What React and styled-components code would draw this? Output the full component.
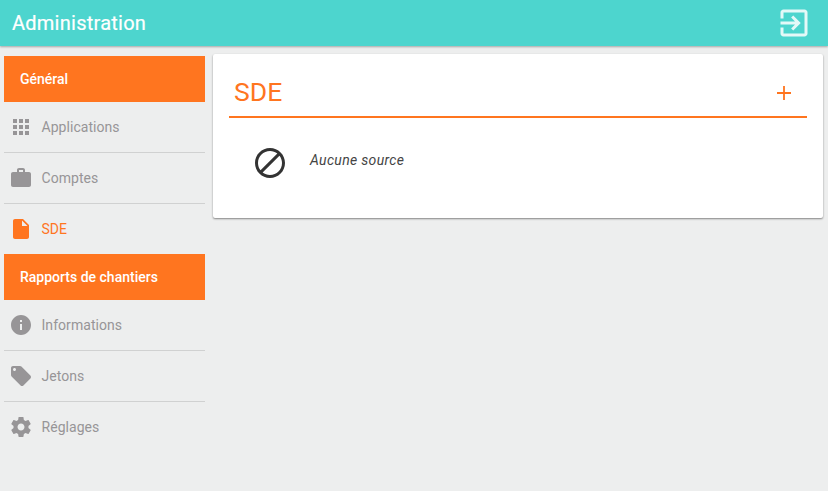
import React from "react";
import styled, { createGlobalStyle } from "styled-components";

const Global = createGlobalStyle`
  html, body { margin: 0; padding: 0; height: 100%; background: #edeeee; }
  body { font-family: Roboto, "Liberation Sans", sans-serif; overflow: hidden; }
  #root { height: 100%; }
`;

const Page = styled.div`
  width: 828px;
  height: 491px;
  display: flex;
  flex-direction: column;
  background: #edeeee;
`;

const Header = styled.header`
  height: 46px;
  flex: none;
  box-sizing: border-box;
  display: flex;
  align-items: center;
  justify-content: space-between;
  padding: 0 16px 0 12px;
  background: #4dd5ce;
  box-shadow: 0 1px 2px rgba(0, 0, 0, 0.3);
`;

const AppTitle = styled.h1`
  margin: 0;
  font-size: 20px;
  font-weight: 400;
  letter-spacing: 0.25px;
  color: #fff;
  -webkit-text-stroke: 0.2px #fff;
`;

const Body = styled.div`
  flex: 1;
  display: flex;
  align-items: flex-start;
  gap: 8px;
  padding: 8px 5px 0 4px;
`;

const Sidebar = styled.nav`
  width: 201px;
  flex: none;
  padding-top: 2px;
  display: flex;
  flex-direction: column;
`;

const SectionHead = styled.div`
  height: 46px;
  display: flex;
  align-items: center;
  padding-left: 16px;
  background: #ff751f;
  color: #fff;
  font-size: 14px;
  font-weight: 500;
`;

const NavItem = styled.div`
  box-sizing: border-box;
  display: flex;
  align-items: center;
  gap: 8.5px;
  padding-left: 5px;
  font-size: 14px;
  letter-spacing: 0.05px;
  color: ${(p) => (p.$active ? "#ff751f" : "#979597")};
  border-bottom: ${(p) => (p.$last ? "none" : "1px solid #d0d1d1")};
  height: ${(p) => (p.$last ? "50px" : "51px")};
`;

const Card = styled.main`
  flex: 1;
  height: 164px;
  box-sizing: border-box;
  padding: 0 16px;
  background: #fff;
  border-radius: 2px;
  box-shadow: 0 1px 2px rgba(0, 0, 0, 0.45);
`;

const CardHead = styled.div`
  height: 64px;
  box-sizing: border-box;
  display: flex;
  align-items: center;
  justify-content: space-between;
  padding: 16px 16px 0 5px;
  border-bottom: 2px solid #ff751f;
  color: #ff751f;
`;

const CardTitle = styled.h2`
  margin: 0 0 3px;
  font-size: 26.5px;
  font-weight: 400;
`;

const EmptyRow = styled.div`
  display: flex;
  align-items: flex-start;
  gap: 22px;
  padding: 27px 0 0 23px;
  color: #333;
`;

const EmptyText = styled.span`
  margin-top: 5px;
  font-size: 14px;
  font-style: italic;
  line-height: 20px;
  letter-spacing: 0.32px;
  color: #444;
`;

const PlusIcon = styled.svg`
  display: block;
  width: 14px;
  height: 14px;
`;

const ExitIcon = styled.svg`
  display: block;
  width: 36px;
  height: 36px;
  margin-top: -1px;
  fill: rgba(255, 255, 255, 0.85);
`;

const IconSvg = styled.svg`
  display: block;
  flex: none;
  width: ${(p) => p.$size}px;
  height: ${(p) => p.$size}px;
  fill: currentColor;
`;

const paths = {
  apps: "M4 8h4V4H4v4zm6 12h4v-4h-4v4zm-6 0h4v-4H4v4zm0-6h4v-4H4v4zm6 0h4v-4h-4v4zm6-10v4h4V4h-4zm-6 4h4V4h-4v4zm6 6h4v-4h-4v4zm0 6h4v-4h-4v4z",
  work: "M20 6h-4V4c0-1.11-.89-2-2-2h-4c-1.11 0-2 .89-2 2v2H4c-1.11 0-1.99.89-1.99 2L2 19c0 1.11.89 2 2 2h16c1.11 0 2-.89 2-2V8c0-1.11-.89-2-2-2zm-6 0h-4V4h4v2z",
  file: "M6 2c-1.1 0-1.99.9-1.99 2L4 20c0 1.1.89 2 2 2h12c1.1 0 2-.9 2-2V8l-6-6H6zm7 7V3.5L18.5 9H13z",
  info: "M12 2C6.48 2 2 6.48 2 12s4.48 10 10 10 10-4.48 10-10S17.52 2 12 2zm1 15h-2v-6h2v6zm0-8h-2V7h2v2z",
  tag: "M21.41 11.58l-9-9C12.05 2.22 11.55 2 11 2H4c-1.1 0-2 .9-2 2v7c0 .55.22 1.05.59 1.42l9 9c.36.36.86.58 1.41.58.55 0 1.05-.22 1.41-.59l7-7c.37-.36.59-.86.59-1.41 0-.55-.23-1.06-.59-1.42zM5.5 7C4.67 7 4 6.33 4 5.5S4.67 4 5.5 4 7 4.67 7 5.5 6.33 7 5.5 7z",
  gear: "M19.43 12.98c.04-.32.07-.64.07-.98s-.03-.66-.07-.98l2.11-1.65c.19-.15.24-.42.12-.64l-2-3.46c-.12-.22-.39-.3-.61-.22l-2.49 1c-.52-.4-1.08-.73-1.69-.98l-.38-2.65C14.46 2.18 14.25 2 14 2h-4c-.25 0-.46.18-.49.42l-.38 2.65c-.61.25-1.17.59-1.69.98l-2.49-1c-.23-.09-.49 0-.61.22l-2 3.46c-.13.22-.07.49.12.64l2.11 1.65c-.04.32-.07.65-.07.98s.03.66.07.98l-2.11 1.65c-.19.15-.24.42-.12.64l2 3.46c.12.22.39.3.61.22l2.49-1c.52.4 1.08.73 1.69.98l.38 2.65c.03.24.24.42.49.42h4c.25 0 .46-.18.49-.42l.38-2.65c.61-.25 1.17-.59 1.69-.98l2.49 1c.23.09.49 0 .61-.22l2-3.46c.12-.22.07-.49-.12-.64l-2.11-1.65zM12 15.5c-1.93 0-3.5-1.57-3.5-3.5s1.57-3.5 3.5-3.5 3.5 1.57 3.5 3.5-1.57 3.5-3.5 3.5z",
  block: "M12 2C6.48 2 2 6.48 2 12s4.48 10 10 10 10-4.48 10-10S17.52 2 12 2zM4 12c0-4.42 3.58-8 8-8 1.85 0 3.55.63 4.9 1.69L5.69 16.9C4.63 15.55 4 13.85 4 12zm8 8c-1.85 0-3.55-.63-4.9-1.69L18.31 7.1C19.37 8.45 20 10.15 20 12c0 4.42-3.58 8-8 8z",
};

const Icon = ({ name, size = 24 }) => (
  <IconSvg $size={size} viewBox="0 0 24 24" aria-hidden="true">
    <path d={paths[name]} />
  </IconSvg>
);

const sections = [
  {
    title: "Général",
    items: [
      { icon: "apps", label: "Applications" },
      { icon: "work", label: "Comptes" },
      { icon: "file", label: "SDE", active: true },
    ],
  },
  {
    title: "Rapports de chantiers",
    items: [
      { icon: "info", label: "Informations" },
      { icon: "tag", label: "Jetons" },
      { icon: "gear", label: "Réglages" },
    ],
  },
];

export default function App() {
  return (
    <Page>
      <Global />
      <Header>
        <AppTitle>Administration</AppTitle>
        <ExitIcon viewBox="0 0 24 24" aria-hidden="true">
          <path d="M10.09 15.59L11.5 17l5-5-5-5-1.41 1.41L12.67 11H3v2h9.67l-2.58 2.59zM19 3H5c-1.11 0-2 .9-2 2v4h2V5h14v14H5v-4H3v4c0 1.1.89 2 2 2h14c1.1 0 2-.89 2-2V5c0-1.1-.9-2-2-2z" />
        </ExitIcon>
      </Header>
      <Body>
        <Sidebar>
          {sections.map((s) => (
            <React.Fragment key={s.title}>
              <SectionHead>{s.title}</SectionHead>
              {s.items.map((it, i) => (
                <NavItem key={it.label} $active={it.active} $last={i === s.items.length - 1}>
                  <Icon name={it.icon} />
                  {it.label}
                </NavItem>
              ))}
            </React.Fragment>
          ))}
        </Sidebar>
        <Card>
          <CardHead>
            <CardTitle>SDE</CardTitle>
            <PlusIcon viewBox="0 0 14 14" aria-hidden="true">
              <path d="M6.1 0h1.8v6.1H14v1.8H7.9V14H6.1V7.9H0V6.1h6.1z" fill="currentColor" />
            </PlusIcon>
          </CardHead>
          <EmptyRow>
            <Icon name="block" size={36} />
            <EmptyText>Aucune source</EmptyText>
          </EmptyRow>
        </Card>
      </Body>
    </Page>
  );
}
